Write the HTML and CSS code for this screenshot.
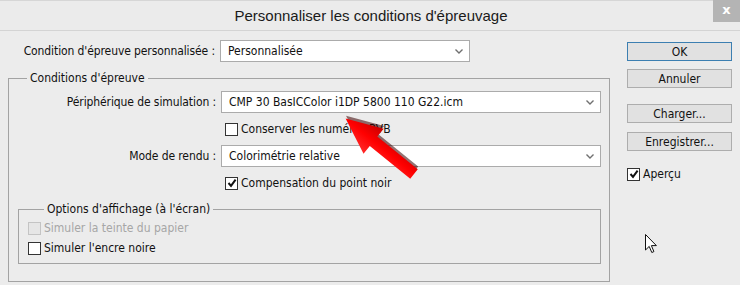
FILE: index.html
```html
<!DOCTYPE html>
<html lang="fr">
<head>
<meta charset="utf-8">
<title>Personnaliser les conditions d'épreuvage</title>
<link rel="stylesheet" href="styles.css">
</head>
<body>
<div class="dialog">
  <div class="titlebar">
    <span class="title">Personnaliser les conditions d'épreuvage</span>
    <span class="close">x</span>
  </div>
  <div class="content">
    <div class="main">
      <div class="row top-row">
        <span class="label">Condition d'épreuve personnalisée :</span>
        <div class="select sel-short"><span>Personnalisée</span><svg class="chev" width="8" height="5" viewBox="0 0 8 5"><path d="M0.5 0.5 L4 4 L7.5 0.5" fill="none" stroke="#707070" stroke-width="1.4"/></svg></div>
      </div>
      <fieldset class="group outer">
        <legend>Conditions d'épreuve</legend>
        <div class="row r-periph">
          <span class="label">Périphérique de simulation :</span>
          <div class="select sel-long"><span>CMP 30 BasICColor i1DP 5800 110 G22.icm</span><svg class="chev" width="8" height="5" viewBox="0 0 8 5"><path d="M0.5 0.5 L4 4 L7.5 0.5" fill="none" stroke="#707070" stroke-width="1.4"/></svg></div>
        </div>
        <div class="row r-check1">
          <span class="label"></span>
          <label class="check"><span class="box"></span>Conserver les numéros RVB</label>
        </div>
        <div class="row r-mode">
          <span class="label">Mode de rendu :</span>
          <div class="select sel-long"><span>Colorimétrie relative</span><svg class="chev" width="8" height="5" viewBox="0 0 8 5"><path d="M0.5 0.5 L4 4 L7.5 0.5" fill="none" stroke="#707070" stroke-width="1.4"/></svg></div>
        </div>
        <div class="row r-check2">
          <span class="label"></span>
          <label class="check"><span class="box checked"><svg width="10" height="10" viewBox="0 0 10 10"><path d="M1.5 5 L4 7.8 L8.6 1.6" fill="none" stroke="#111" stroke-width="2"/></svg></span>Compensation du point noir</label>
        </div>
        <fieldset class="group inner">
          <legend>Options d'affichage (à l'écran)</legend>
          <label class="check disabled c-first"><span class="box"></span>Simuler la teinte du papier</label>
          <label class="check c-second"><span class="box"></span>Simuler l'encre noire</label>
        </fieldset>
      </fieldset>
    </div>
    <div class="side">
      <div class="btn default b-ok">OK</div>
      <div class="btn b-cancel">Annuler</div>
      <div class="btn b-load">Charger...</div>
      <div class="btn b-save">Enregistrer...</div>
      <label class="check c-preview"><span class="box checked"><svg width="10" height="10" viewBox="0 0 10 10"><path d="M1.5 5 L4 7.8 L8.6 1.6" fill="none" stroke="#111" stroke-width="2"/></svg></span>Aperçu</label>
    </div>
  </div>
  <svg class="red-arrow" width="740" height="285" viewBox="0 0 740 285">
    <defs>
      <linearGradient id="rg" x1="0" y1="0" x2="0" y2="1">
        <stop offset="0" stop-color="#ff2a2a"/>
        <stop offset="0.5" stop-color="#ff0000"/>
        <stop offset="1" stop-color="#c80000"/>
      </linearGradient>
    </defs>
    <g transform="translate(414 173) rotate(219)">
      <polygon points="0,-6 52,-6 52,-16 88,0 52,16 52,6 0,6" fill="#3a0000" opacity="0.55" transform="translate(1.5 2.5)"/>
      <polygon points="0,-6 52,-6 52,-16 88,0 52,16 52,6 0,6" fill="url(#rg)"/>
    </g>
  </svg>
  <svg class="cursor" width="13" height="20" viewBox="0 0 13 20"><path d="M0.5 0.5 L0.5 16 L4.2 12.4 L6.8 18.5 L8.9 17.6 L6.4 11.6 L11.4 11.6 Z" fill="#fff" stroke="#111" stroke-width="1" stroke-linejoin="miter"/></svg>
</div>
</body>
</html>
```
FILE: styles.css
```css
* { box-sizing: border-box; }
html, body { margin: 0; padding: 0; }
body {
  width: 740px;
  height: 285px;
  overflow: hidden;
  background: #ececec;
  font-family: "DejaVu Sans Condensed", "DejaVu Sans", sans-serif;
  font-size: 12px;
  color: #111;
}
.dialog {
  position: relative;
  width: 740px;
  height: 285px;
  background: #ececec;
  border-top: 1px solid #d6d6d6;
}
.titlebar {
  position: relative;
  height: 30px;
  border-bottom: 1px solid #d4d4d4;
  background: #ebebeb;
  display: flex;
  align-items: center;
  justify-content: center;
}
.title {
  font-family: "Liberation Sans Narrow", "Liberation Sans", sans-serif;
  font-size: 15px;
  color: #1a1a1a;
  margin-left: 2px;
}
.close {
  position: absolute;
  top: -1px;
  right: 0;
  width: 27px;
  height: 22px;
  background: #b4b4b4;
  color: #fff;
  font-family: "DejaVu Sans", sans-serif;
  font-weight: bold;
  font-size: 13px;
  line-height: 20px;
  text-align: center;
}
.content {
  display: flex;
  gap: 17px;
}
.main {
  width: 610px;
  padding-top: 9px;
}
.row {
  display: flex;
  align-items: center;
}
.label {
  text-align: right;
  white-space: nowrap;
  letter-spacing: -0.1px;
}
.top-row .label { width: 215px; }
.top-row .select { margin-left: 5px; }
.group .row .label { width: 207px; }
.group .row .select { margin-left: 5px; }
.select {
  height: 22px;
  background: #fff;
  border: 1px solid #ababab;
  display: flex;
  align-items: center;
  justify-content: space-between;
  padding: 0 6px 0 7px;
}
.sel-short { width: 250px; }
.sel-long { width: 380px; height: 22px; }
.chev { display: block; }
.group {
  margin: 0;
  padding: 0;
  border: 1px solid #a3a3a3;
  min-width: 0;
}
.group legend {
  padding: 0 3px;
  line-height: 14px;
  font-size: 12px;
}
.outer {
  margin: 9px 0 0 8px;
  width: 602px;
  height: 211px;
}
.outer > legend { margin-left: 18px; }
.r-periph { margin-top: 6px; }
.r-check1 { margin-top: 9px; height: 14px; }
.r-mode { margin-top: 9px; }
.r-mode .select { height: 22px; }
.r-check2 { margin-top: 9px; height: 14px; }
.group .row .check { margin-left: 9px; }
.check {
  display: flex;
  align-items: center;
  line-height: 14px;
  white-space: nowrap;
}
.box {
  width: 13px;
  height: 13px;
  border: 1px solid #333;
  background: #fff;
  margin-right: 3px;
  display: flex;
  align-items: center;
  justify-content: center;
}
.inner {
  margin: 12px 9px 0 9px;
  width: 583px;
  height: 62px;
  padding-left: 9px;
}
.inner > legend { margin-left: 16px; }
.c-first { margin-top: 5px; }
.c-second { margin-top: 6px; }
.disabled { color: #a6a6a6; }
.disabled .box { border-color: #c4c4c4; background: #e6e6e6; }
.side {
  width: 105px;
  padding-top: 11px;
  display: flex;
  flex-direction: column;
}
.btn {
  height: 19px;
  border: 1px solid #adadad;
  background: #e1e1e1;
  display: flex;
  align-items: center;
  justify-content: center;
  line-height: 14px;
}
.btn.default { border-color: #3c7fb1; }
.b-cancel { margin-top: 8px; }
.b-load { margin-top: 16px; }
.b-save { margin-top: 9px; }
.c-preview { margin-top: 16px; }
.red-arrow {
  position: absolute;
  left: 0;
  top: 0;
  pointer-events: none;
}
.cursor {
  position: absolute;
  left: 645px;
  top: 233px;
}
```
